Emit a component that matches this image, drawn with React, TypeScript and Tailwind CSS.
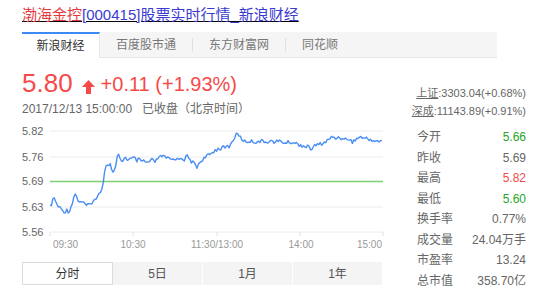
import React from 'react';

const FONT = { fontFamily: '"Liberation Sans", "Noto Sans CJK SC", sans-serif' };

// rough shape of the intraday line, jitter is added on top
const KEYS: [number, number][] = [
  [50, 207], [52, 203], [54, 197], [56, 203], [58, 206], [60, 208], [62, 210], [65, 212], [67, 210],
  [69, 212], [71, 207], [73, 200], [75, 193], [77, 198], [79, 202], [81, 201], [83, 203], [85, 204],
  [87, 206], [89, 205], [91, 204], [93, 200], [95, 200], [97, 199], [99, 193], [101, 190], [103, 185],
  [104, 175], [105, 168], [107, 163], [109, 166], [110, 164], [112, 170], [114, 172], [116, 165],
  [117, 158], [119, 155], [121, 163], [123, 160], [125, 157], [128, 160], [131, 159], [134, 158],
  [137, 161], [139, 159], [141, 162], [143, 160], [146, 163], [149, 162], [152, 160], [155, 162],
  [158, 158], [161, 157], [163, 155], [166, 159], [169, 158], [172, 160], [175, 158], [178, 160],
  [181, 157], [184, 160], [187, 156], [190, 160], [192, 162], [195, 164], [197, 167], [200, 162],
  [203, 159], [206, 157], [209, 155], [212, 153], [215, 150], [218, 149], [222, 148], [226, 147],
  [230, 146], [233, 140], [236, 135], [238, 133], [240, 137], [243, 140], [246, 142], [250, 141],
  [255, 142], [260, 141], [265, 142], [270, 141], [275, 142], [280, 141], [285, 143], [290, 142],
  [295, 143], [300, 145], [304, 146], [308, 147], [312, 149], [314, 146], [317, 145], [320, 144],
  [324, 143], [328, 140], [332, 137], [336, 138], [340, 137], [344, 140], [347, 138], [350, 140],
  [353, 142], [356, 139], [360, 137], [364, 138], [368, 139], [372, 140], [376, 141], [380, 142],
  [383, 140],
];

function buildLine() {
  const pts: string[] = [];
  let k = 0;
  let i = 0;
  for (let x = 50; x <= 383; x += 1.4, i++) {
    while (k < KEYS.length - 2 && KEYS[k + 1][0] < x) k++;
    const [x0, y0] = KEYS[k];
    const [x1, y1] = KEYS[k + 1];
    const t = Math.min(1, Math.max(0, (x - x0) / (x1 - x0)));
    const h = Math.sin(i * 12.9898) * 43758.5453;
    const noise = (h - Math.floor(h) - 0.5) * 3.6;
    pts.push(`${x.toFixed(1)},${(y0 + (y1 - y0) * t + noise).toFixed(1)}`);
  }
  return pts.join(' ');
}

const line = buildLine();

const stats = [
  { label: '今开', value: '5.66', color: 'text-[#28a428]' },
  { label: '昨收', value: '5.69', color: 'text-[#666]' },
  { label: '最高', value: '5.82', color: 'text-[#f54a4a]' },
  { label: '最低', value: '5.60', color: 'text-[#28a428]' },
  { label: '换手率', value: '0.77%', color: 'text-[#666]' },
  { label: '成交量', value: '24.04万手', color: 'text-[#666]' },
  { label: '市盈率', value: '13.24', color: 'text-[#666]' },
  { label: '总市值', value: '358.70亿', color: 'text-[#666]' },
];

const App = () => {
  return (
    <div className="w-[554px] h-[297px] bg-white pl-[22px] pt-[5px] overflow-hidden" style={FONT}>
      {/* Title */}
      <div className="text-[15px] leading-[20px] underline">
        <span className="text-[#e4393c]">渤海金控</span>
        <span className="text-[#3b3bd0]">[000415]股票实时行情_新浪财经</span>
      </div>

      {/* Source tabs */}
      <div className="mt-[7px] w-[475px] h-[26px] flex items-stretch bg-[#f5f5f5] border-b border-[#e6e6e6] text-[12px] text-[#777]">
        <div className="w-[78px] flex items-center justify-center bg-white border-t-2 border-[#3d8af7] border-r border-r-[#e6e6e6] text-[#333] -mb-px">
          新浪财经
        </div>
        {['百度股市通', '东方财富网', '同花顺'].map((t, i) => (
          <div key={t} className="flex items-center">
            <span className="px-[16px]">{t}</span>
            {i < 2 && <span className="w-px h-[14px] bg-[#e0e0e0]" />}
          </div>
        ))}
      </div>

      <div className="flex">
        {/* Left: price + chart */}
        <div className="w-[385px]">
          <div className="flex items-end h-[30px] mt-[10px] text-[#f54a4a]">
            <span className="text-[26px] leading-[30px]">5.80</span>
            <svg width="13" height="14" viewBox="0 0 13 14" className="ml-[9px] mb-[4px]">
              <path d="M6.5 0 L13 7 L9 7 L9 14 L4 14 L4 7 L0 7 Z" fill="#f54a4a" />
            </svg>
            <span className="ml-[6px] text-[20px] leading-[26px] mb-[1px]">+0.11 (+1.93%)</span>
          </div>
          <div className="mt-[3px] text-[12px] leading-[16px] text-[#666]">
            2017/12/13 15:00:00<span className="ml-[10px]">已收盘（北京时间）</span>
          </div>

          <svg width="368" height="140" viewBox="22 122 368 140" className="mt-[5px] block">
            {[131, 157, 207, 232].map((y) => (
              <line key={y} x1="50" x2="383" y1={y} y2={y} stroke="#ececec" strokeWidth="1" />
            ))}
            {[50, 133, 217, 300, 383].map((x) => (
              <line key={x} x1={x} x2={x} y1="232" y2="236" stroke="#e0e0e0" strokeWidth="1" />
            ))}
            <line x1="50" x2="383" y1="181.5" y2="181.5" stroke="#7fcf76" strokeWidth="1.5" />
            <polyline points={line} fill="none" stroke="#4a8ef5" strokeWidth="1.4" strokeLinejoin="round" />
            <g fill="#666" fontSize="11">
              <text x="22" y="135">5.82</text>
              <text x="22" y="161">5.76</text>
              <text x="22" y="185">5.69</text>
              <text x="22" y="211">5.63</text>
              <text x="22" y="236">5.56</text>
            </g>
            <g fill="#999" fontSize="10">
              <text x="53" y="248">09:30</text>
              <text x="133" y="248" textAnchor="middle">10:30</text>
              <text x="217" y="248" textAnchor="middle">11:30/13:00</text>
              <text x="301" y="248" textAnchor="middle">14:00</text>
              <text x="382" y="248" textAnchor="end">15:00</text>
            </g>
          </svg>

          {/* Period tabs */}
          <div className="w-[360px] h-[23px] flex text-[12px] text-[#555]">
            <div className="flex-1 flex items-center justify-center bg-white border border-[#dcdcdc] text-[#333]">分时</div>
            <div className="flex-1 flex items-center justify-center bg-[#f4f4f4]">5日</div>
            <div className="flex-1 flex items-center justify-center bg-[#f4f4f4] border-l border-white">1月</div>
            <div className="flex-1 flex items-center justify-center bg-[#f4f4f4] border-l border-white">1年</div>
          </div>
        </div>

        {/* Right: indices + quote stats */}
        <div className="w-[119px] pt-[26px] text-[#666]">
          <div className="text-right text-[11px] leading-[18px]">
            <span className="underline">上证</span>:3303.04(+0.68%)
          </div>
          <div className="text-right text-[11px] leading-[18px]">
            <span className="underline">深成</span>:11143.89(+0.91%)
          </div>
          <div className="mt-[7px] pl-[10px] text-[12px]">
            {stats.map((s) => (
              <div key={s.label} className="flex justify-between h-[20.5px] items-center">
                <span>{s.label}</span>
                <span className={s.color}>{s.value}</span>
              </div>
            ))}
          </div>
        </div>
      </div>
    </div>
  );
};

export default App;
